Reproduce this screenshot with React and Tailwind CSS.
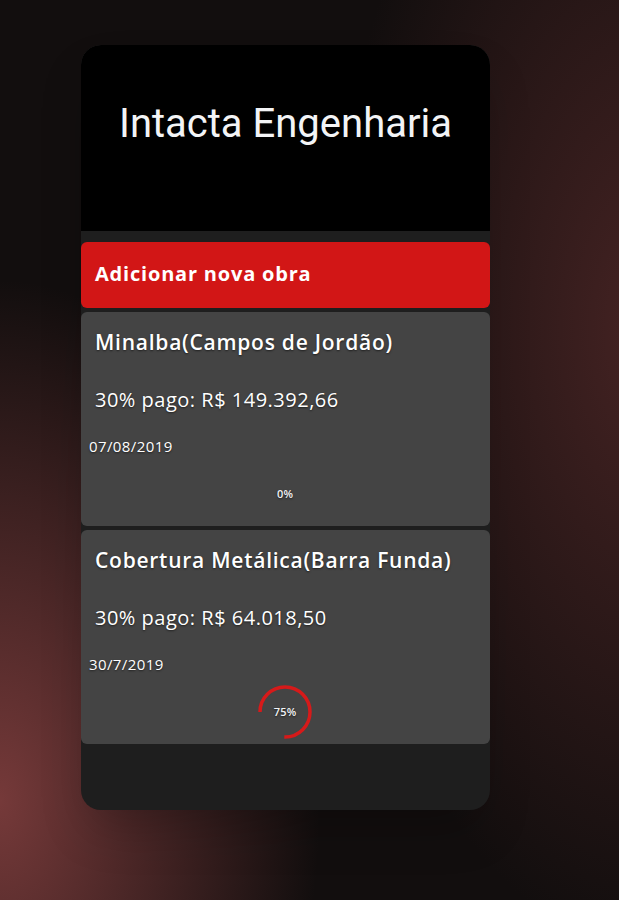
import React from 'react';

const obras = [
    { id: 1, name: 'Minalba(Campos de Jordão)', paid: '30% pago: R$ 149.392,66', date: '07/08/2019', progress: 0 },
    { id: 2, name: 'Cobertura Metálica(Barra Funda)', paid: '30% pago: R$ 64.018,50', date: '30/7/2019', progress: 75 },
];

function ProgressRing({ value }) {
    const r = 25;
    const c = 2 * Math.PI * r;
    return (
        <div className="relative w-[56px] h-[56px] flex items-center justify-center">
            {value > 0 && (
                <svg className="absolute inset-0 rotate-180" width="56" height="56" viewBox="0 0 56 56">
                    <circle
                        cx="28"
                        cy="28"
                        r={r}
                        fill="none"
                        stroke="#d61a1a"
                        strokeWidth="3.5"
                        strokeDasharray={`${(c * value) / 100} ${c}`}
                    />
                </svg>
            )}
            <span className="text-[11px] font-semibold text-gray-100 tracking-[0.2px]">{value}%</span>
        </div>
    );
}

function ObraCard({ obra }) {
    return (
        <div className="h-[214px] bg-[#444444] rounded-[6px] pt-[17px] flex flex-col [text-shadow:0_1px_2px_rgba(0,0,0,0.55)]">
            <p className="px-[14px] text-[21px] leading-[26px] font-semibold text-white tracking-[0.75px]">{obra.name}</p>
            <p className="px-[14px] mt-[32px] text-[20px] leading-[26px] text-white tracking-[0.5px]">{obra.paid}</p>
            <p className="px-[8px] mt-[23px] text-[15px] leading-[20px] font-medium text-white tracking-[0.4px]">{obra.date}</p>
            <div className="mt-[10px] flex justify-center pr-[1px]">
                <ProgressRing value={obra.progress} />
            </div>
        </div>
    );
}

export default function App() {
    return (
        <div className="w-full h-[900px] overflow-hidden bg-[#120e0e] bg-[radial-gradient(ellipse_320px_520px_at_0px_800px,rgba(128,62,62,0.9),transparent),radial-gradient(ellipse_320px_620px_at_650px_330px,rgba(82,40,40,0.8),transparent)] pt-[45px] font-['Open_Sans',sans-serif]">
            <div className="ml-[81px] w-[409px] rounded-[20px] bg-[#1e1e1e] overflow-hidden shadow-2xl">
                {/* Header */}
                <div className="h-[186px] bg-black rounded-t-[20px] flex justify-center pt-[56px]">
                    <h1 className="font-['Roboto',sans-serif] text-[40px] leading-[46px] text-gray-100">Intacta Engenharia</h1>
                </div>
                <div className="h-[11px]" />

                <div className="flex flex-col gap-[4px]">
                    <button className="h-[66px] bg-[#d21616] rounded-[6px] text-left px-[14px] pb-[3px] text-[20px] font-bold text-white tracking-[0.8px]">
                        Adicionar nova obra
                    </button>
                    {obras.map((obra) => (
                        <ObraCard key={obra.id} obra={obra} />
                    ))}
                </div>

                <div className="h-[66px]" />
            </div>
        </div>
    );
}
